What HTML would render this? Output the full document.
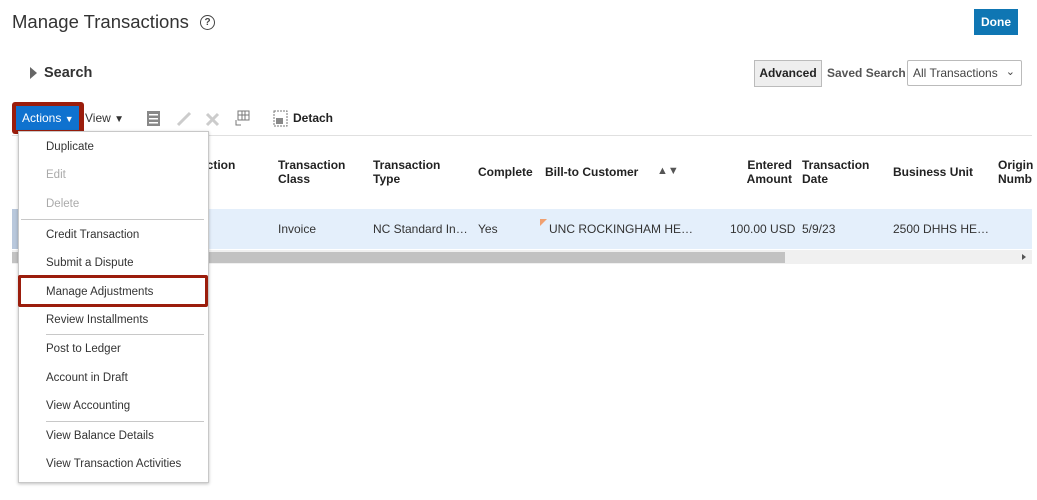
<!DOCTYPE html>
<html><head><style>
body{margin:0;width:1037px;height:500px;background:#fff;font-family:"Liberation Sans",Arial,sans-serif;position:relative;overflow:hidden;color:#333}
.a{position:absolute;white-space:nowrap}
.h{font-weight:bold;font-size:12px;color:#222;line-height:14px}
.c{font-size:12px;color:#333}
.mi{position:absolute;left:46px;font-size:11.5px;color:#333}
.sep{position:absolute;left:24px;width:180px;height:1px;background:#c8c8c8}
</style></head><body>
<div class="a" style="left:12px;top:11px;font-size:18.5px;color:#333">Manage Transactions</div>
<div class="a" style="left:200px;top:15px;width:13px;height:13px;border:1.5px solid #444;border-radius:50%;font-size:10px;text-align:center;line-height:13px;font-weight:bold;color:#444">?</div>
<div class="a" style="left:974px;top:9px;width:44px;height:26px;background:#0f76b3;color:#fff;font-weight:bold;font-size:12px;text-align:center;line-height:26px">Done</div>
<div class="a" style="left:30px;top:67px;width:0;height:0;border-left:7px solid #666;border-top:6px solid transparent;border-bottom:6px solid transparent"></div>
<div class="a" style="left:44px;top:65px;font-size:14.5px;font-weight:bold;color:#333">Search</div>
<div class="a" style="left:754px;top:60px;width:66px;height:25px;background:#eee;border:1px solid #bbb;font-weight:bold;font-size:12px;text-align:center;line-height:25px;color:#222">Advanced</div>
<div class="a" style="left:827px;top:66px;font-size:12px;font-weight:bold;color:#555">Saved Search</div>
<div class="a" style="left:907px;top:60px;font-size:12px;line-height:25px;color:#444;padding-left:5px;box-sizing:border-box;width:115px;height:26px;border:1px solid #bbb;border-radius:2px">All Transactions<span style="position:absolute;right:6px;top:-1px;font-size:11px">&#8964;</span></div>

<div class="a" style="left:12px;top:102px;width:72px;height:32px;background:#9b1d0c;border-radius:3px"></div>
<div class="a" style="left:16px;top:106px;width:63px;height:24px;background:#0f72cf;color:#fff;font-size:12px;line-height:24px;padding-left:6px;box-sizing:border-box">Actions <span style="font-size:9px">&#9660;</span></div>
<div class="a" style="left:85px;top:111px;font-size:12px;color:#333">View <span style="font-size:10px">&#9660;</span></div>
<svg class="a" style="left:146px;top:110px" width="200" height="18">
<rect x="1" y="1" width="13" height="15" fill="#888"/><rect x="3" y="4" width="9" height="1.5" fill="#fff"/><rect x="3" y="8" width="9" height="1.5" fill="#fff"/><rect x="3" y="12" width="9" height="1.5" fill="#fff"/>
<path d="M32 15 L44 3" stroke="#ccc" stroke-width="3"/>
<path d="M61 4 L72 15 M72 4 L61 15" stroke="#ccc" stroke-width="3"/>
<rect x="92" y="1" width="11" height="9" fill="none" stroke="#777"/><path d="M92 5 H103 M96 1V10 M99 1V10 M90 10 V15 H95" stroke="#777" fill="none"/>
<rect x="128" y="1" width="13" height="15" fill="none" stroke="#777" stroke-dasharray="2 1"/><rect x="130" y="8" width="7" height="6" fill="#888"/>
</svg>
<div class="a" style="left:293px;top:111px;font-size:12px;font-weight:bold;color:#222">Detach</div>

<div class="a" style="left:12px;top:135px;width:1020px;height:1px;background:#e0e0e0"></div>
<div class="a h" style="left:200px;top:158px">action<br>e</div>
<div class="a h" style="left:278px;top:158px">Transaction<br>Class</div>
<div class="a h" style="left:373px;top:158px">Transaction<br>Type</div>
<div class="a h" style="left:478px;top:165px">Complete</div>
<div class="a h" style="left:545px;top:165px">Bill-to Customer</div>
<div class="a" style="left:657px;top:165px;font-size:11px;color:#555">&#9650;&#9660;</div>
<div class="a h" style="left:738px;top:158px;text-align:right;width:54px">Entered<br>Amount</div>
<div class="a h" style="left:802px;top:158px">Transaction<br>Date</div>
<div class="a h" style="left:893px;top:165px">Business Unit</div>
<div class="a h" style="left:998px;top:158px">Origin<br>Numb</div>

<div class="a" style="left:12px;top:209px;width:1020px;height:40px;background:#e4effb"></div>
<div class="a" style="left:12px;top:209px;width:6px;height:40px;background:#b9c8dc"></div>
<div class="a c" style="left:200px;top:222px">l</div>
<div class="a c" style="left:278px;top:222px">Invoice</div>
<div class="a c" style="left:373px;top:222px">NC Standard In…</div>
<div class="a c" style="left:478px;top:222px">Yes</div>
<div class="a" style="left:540px;top:219px;width:0;height:0;border-top:7px solid #f0a070;border-right:7px solid transparent"></div>
<div class="a c" style="left:549px;top:222px">UNC ROCKINGHAM HE…</div>
<div class="a c" style="left:730px;top:222px">100.00 USD</div>
<div class="a c" style="left:802px;top:222px">5/9/23</div>
<div class="a c" style="left:893px;top:222px">2500 DHHS HE…</div>
<div class="a" style="left:12px;top:250px;width:1020px;height:14px;background:#f0f0f0"></div>
<div class="a" style="left:12px;top:252px;width:773px;height:11px;background:#c2c2c2"></div>
<div class="a" style="left:1022px;top:254px;border-left:4px solid #555;border-top:3px solid transparent;border-bottom:3px solid transparent"></div>

<div class="a" style="left:18px;top:131px;width:189px;height:350px;background:#fff;border:1px solid #c8c8c8;box-shadow:0 1px 3px rgba(0,0,0,.25)"></div>
<div class="mi" style="top:141px">Duplicate</div>
<div class="mi" style="top:169px;color:#aaa">Edit</div>
<div class="mi" style="top:198px;color:#aaa">Delete</div>
<div class="sep" style="top:219px;left:21px;width:183px"></div>
<div class="mi" style="top:229px">Credit Transaction</div>
<div class="mi" style="top:257px">Submit a Dispute</div>
<div class="a" style="left:18px;top:275px;width:184px;height:26px;border:3.5px solid #9b1d0c;border-radius:2px"></div>
<div class="mi" style="top:286px">Manage Adjustments</div>
<div class="mi" style="top:314px">Review Installments</div>
<div class="sep" style="top:334px;left:46px;width:158px"></div>
<div class="mi" style="top:343px">Post to Ledger</div>
<div class="mi" style="top:372px">Account in Draft</div>
<div class="mi" style="top:400px">View Accounting</div>
<div class="sep" style="top:421px;left:46px;width:158px"></div>
<div class="mi" style="top:430px">View Balance Details</div>
<div class="mi" style="top:458px">View Transaction Activities</div>
</body></html>
